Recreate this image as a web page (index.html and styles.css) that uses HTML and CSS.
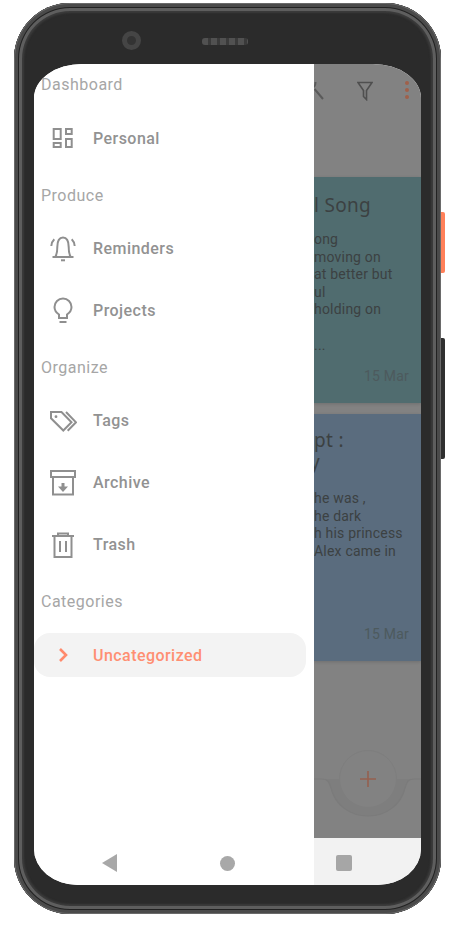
FILE: index.html
```html
<!DOCTYPE html>
<html lang="en">

<head>
    <meta charset="UTF-8" />
    <title>Notes drawer</title>
    <link rel="stylesheet" href="styles.css">
</head>

<body>
    <div class="phone">
        <div class="side-btn side-orange"></div>
        <div class="side-btn side-black"></div>

        <div class="earpiece">
            <div class="camera"></div>
            <div class="speaker"></div>
        </div>

        <div class="screen">
            <div class="drawer">
                <div class="menu">
                    <div class="heading first">Dashboard</div>
                    <div class="row">
                        <svg class="icon" viewBox="0 0 28 28">
                            <rect x="4.700" y="5" width="7" height="10" />
                            <rect x="17" y="5" width="5.700" height="5" />
                            <rect x="4.700" y="19" width="7" height="4" />
                            <rect x="17" y="15" width="5.700" height="8" />
                        </svg>
                        <span>Personal</span>
                    </div>

                    <div class="heading">Produce</div>
                    <div class="row">
                        <svg class="icon" viewBox="0 0 28 28">
                            <path d="M6.500 22.500C8 20 8.300 17 8.300 13C8.300 7.500 10 3.500 14 3.500S19.700 7.500 19.700 13C19.700 17 20 20 21.500 22.500" />
                            <path d="M3.500 23H24.500" />
                            <path d="M2.300 12C2.600 9 3.500 7 5.300 5.300M25.700 12C25.400 9 24.500 7 22.700 5.300" />
                            <path d="M12 26.300H16" />
                        </svg>
                        <span>Reminders</span>
                    </div>
                    <div class="row">
                        <svg class="icon" viewBox="0 0 28 28">
                            <path d="M10 18.500C7 16.500 5.500 14 5.500 11A8.500 8.500 0 0 1 22.500 11C22.500 14 21 16.500 18 18.500V22H10Z" />
                            <path d="M10.500 26H17.500" />
                        </svg>
                        <span>Projects</span>
                    </div>

                    <div class="heading">Organize</div>
                    <div class="row">
                        <svg class="icon" viewBox="0 0 28 28">
                            <path d="M2 6H12.500L22.500 16.300L14.300 24.500L2 12.300Z" />
                            <path d="M17 6L27 16.300L18.700 24.700" />
                            <circle class="solid" cx="7" cy="10.700" r="1.400" />
                        </svg>
                        <span>Tags</span>
                    </div>
                    <div class="row">
                        <svg class="icon" viewBox="0 0 28 28">
                            <rect x="2" y="3" width="24" height="6" />
                            <path d="M4 9V26.500H24V9" />
                            <path class="solid" d="M12.500 15H15.500V18.500H19L14 24L9 18.500H12.500Z" />
                        </svg>
                        <span>Archive</span>
                    </div>
                    <div class="row">
                        <svg class="icon" viewBox="0 0 28 28">
                            <path d="M3 6H25M9 6V3.500H19V6M5.500 6V27H22.500V6M11 11V22M17 11V22" />
                        </svg>
                        <span>Trash</span>
                    </div>

                    <div class="heading">Categories</div>
                    <div class="row pill">
                        <svg class="icon chevron" viewBox="0 0 28 28">
                            <path d="M11 8L17 14L11 20" />
                        </svg>
                        <span>Uncategorized</span>
                    </div>
                </div>
                <div class="navbar navbar-left">
                    <svg class="nav-back" viewBox="0 0 15 18"><path d="M15 0V18L0 9Z" /></svg>
                    <div class="nav-home"></div>
                </div>
            </div>

            <div class="content">
                <div class="main">
                    <div class="topbar">
                        <svg class="top-search" viewBox="0 0 10 20">
                            <path d="M0 6C1 5 1.500 3 1.500 1M0.500 8L9 18" />
                        </svg>
                        <svg class="top-filter" viewBox="0 0 16 20">
                            <path d="M1 1.500H15L9.500 9.500V18.500L6.500 15.500V9.500Z" />
                        </svg>
                        <div class="top-dots">
                            <i></i><i></i><i></i>
                        </div>
                    </div>

                    <div class="card card-teal">
                        <div class="card-title">l Song</div>
                        <div class="card-body">
                            <div>ong</div>
                            <div>moving on</div>
                            <div>at better but</div>
                            <div>ul</div>
                            <div>holding on</div>
                            <div>&nbsp;</div>
                            <div>...</div>
                        </div>
                        <div class="card-date">15 Mar</div>
                    </div>

                    <div class="card card-blue">
                        <div class="card-title">
                            <div>pt :</div>
                            <div class="cut">y</div>
                        </div>
                        <div class="card-body">
                            <div>he was ,</div>
                            <div>he dark</div>
                            <div>h his princess</div>
                            <div>Alex came in</div>
                        </div>
                        <div class="card-date">15 Mar</div>
                    </div>

                    <svg class="notch" viewBox="0 0 107 60">
                        <path d="M0 2H8C14 2 15 5 17 11C21 28 36 39 54 39C72 39 87 28 91 11C93 5 94 2 100 2H107" />
                    </svg>
                    <div class="fab">
                        <svg viewBox="0 0 16 16"><path d="M8 0V16M0 8H16" /></svg>
                    </div>
                </div>
                <div class="navbar navbar-right">
                    <div class="nav-square"></div>
                </div>
            </div>
        </div>

        <div class="ground"></div>
    </div>
</body>

</html>
```

FILE: styles.css
```css
* {
    box-sizing: border-box;
}

body {
    margin: 0;
    background-color: #fff;
    font-family: "Roboto", sans-serif;
}

.phone {
    position: relative;
    width: 427px;
    height: 911px;
    margin: 3px 0 0 14px;
    padding-left: 20px;
    background-color: #2b2b2b;
    border-radius: 56px;
    box-shadow: inset 0 0 0 1px #6a6a6a, inset 0 0 0 4px #4a4a4a, inset 0 0 0 5px #222, inset 0 0 0 8px #5e5e5e, inset 0 0 2px 10px #3c3c3c;
}

.side-btn {
    position: absolute;
    left: 427px;
    width: 4px;
    border-radius: 0 2px 2px 0;
}

.side-orange {
    top: 209px;
    height: 61px;
    background-color: #ff8059;
}

.side-black {
    top: 335px;
    height: 121px;
    background-color: #2f2f2f;
}

.earpiece {
    display: flex;
    align-items: center;
    gap: 61px;
    height: 61px;
    padding: 14px 0 0 88px;
}

.camera {
    width: 19px;
    height: 19px;
    border: 5px solid #454545;
    border-radius: 50%;
    background-color: #333;
}

.speaker {
    width: 46px;
    height: 7px;
    margin-top: 2px;
    border-radius: 3px;
    background: repeating-linear-gradient(90deg, #515151 0 6px, #3a3a3a 6px 9px);
}

.screen {
    display: flex;
    width: 387px;
    height: 821px;
    overflow: hidden;
    background-color: #fff;
    border-radius: 48px 48px 44px 44px / 34px 34px 36px 36px;
}

.drawer {
    display: flex;
    flex-direction: column;
    width: 280px;
    background-color: #fff;
}

.menu {
    flex: 1;
}

.heading {
    height: 48px;
    padding: 17px 0 0 7px;
    font-size: 16px;
    line-height: 20px;
    letter-spacing: 0.5px;
    color: #a6a6a6;
}

.heading.first {
    height: 43px;
    padding-top: 11px;
}

.row {
    display: flex;
    align-items: center;
    gap: 16px;
    height: 62px;
    padding-left: 15px;
    font-size: 16px;
    font-weight: 500;
    letter-spacing: 0.45px;
    color: #929292;
}

.icon {
    flex: none;
    width: 28px;
    height: 28px;
    fill: none;
    stroke: #8f8f8f;
    stroke-width: 2;
}

.icon .solid {
    fill: #8f8f8f;
    stroke: none;
}

.pill {
    width: 272px;
    height: 44px;
    margin-top: 10px;
    background-color: #f3f3f3;
    border-radius: 16px;
    color: #ff8f72;
}

.chevron {
    stroke: #ff8a6c;
    stroke-width: 2.600;
}

.navbar {
    display: flex;
    align-items: center;
    flex: none;
    height: 47px;
    padding-top: 3px;
}

.navbar-left {
    padding-left: 68px;
    gap: 103px;
}

.nav-back {
    width: 15px;
    height: 18px;
    fill: #a8a8a8;
}

.nav-home {
    width: 15px;
    height: 15px;
    border-radius: 50%;
    background-color: #a8a8a8;
}

.content {
    display: flex;
    flex-direction: column;
    width: 107px;
}

.main {
    position: relative;
    flex: 1;
    overflow: hidden;
    background-color: #828282;
}

.navbar-right {
    padding-left: 22px;
    background-color: #f2f2f2;
}

.nav-square {
    width: 16px;
    height: 16px;
    border-radius: 2px;
    background-color: #a6a6a6;
}

.topbar {
    display: flex;
    align-items: flex-start;
    height: 113px;
    padding-top: 17px;
}

.top-search {
    width: 10px;
    height: 20px;
    fill: none;
    stroke: #5a5a5a;
    stroke-width: 2;
}

.top-filter {
    width: 16px;
    height: 20px;
    margin-left: 33px;
    fill: none;
    stroke: #4f4f4f;
    stroke-width: 1.600;
}

.top-dots {
    display: flex;
    flex-direction: column;
    gap: 3px;
    margin-left: 32px;
}

.top-dots i {
    width: 4px;
    height: 4px;
    border-radius: 50%;
    background-color: #a0604a;
}

.card {
    position: relative;
    margin-bottom: 11px;
    color: #3c4142;
    box-shadow: 0 1px 3px rgba(0, 0, 0, 0.15);
}

.card-teal {
    height: 226px;
    background-color: #506c6f;
}

.card-blue {
    height: 247px;
    background-color: #5a6c7e;
}

.card-title {
    padding-top: 15px;
    font-family: "Noto Sans", sans-serif;
    font-size: 19px;
    line-height: 24px;
    letter-spacing: 0.3px;
}

.card-teal .card-title {
    padding-top: 16px;
}

.card-blue .card-title {
    line-height: 22px;
}

.cut {
    margin-left: -4px;
}

.card-body {
    padding-top: 14px;
    font-size: 14px;
    line-height: 17.600px;
    letter-spacing: 0.2px;
}

.card-blue .card-body {
    padding-top: 17px;
}

.card-date {
    position: absolute;
    right: 12px;
    bottom: 18px;
    font-size: 14px;
    line-height: 17px;
    letter-spacing: 0.2px;
    color: #4d5a5d;
}

.notch {
    position: absolute;
    left: 0;
    top: 713px;
    width: 107px;
    height: 60px;
    fill: #7e7e7e;
    stroke: #7b7b7b;
    stroke-width: 1.200;
}

.fab {
    display: flex;
    align-items: center;
    justify-content: center;
    position: absolute;
    left: 25px;
    top: 686px;
    width: 58px;
    height: 58px;
    border: 1px solid #7e7e7e;
    border-radius: 50%;
    background-color: #828282;
}

.fab svg {
    width: 16px;
    height: 16px;
    fill: none;
    stroke: #95604f;
    stroke-width: 1.600;
}

.ground {
    position: absolute;
    left: 30px;
    right: 14px;
    top: 911px;
    height: 3px;
    background: linear-gradient(90deg, #fff, #aaa 5%, #ccc 50%, #aaa 95%, #fff);
    filter: blur(0.5px);
}
```
